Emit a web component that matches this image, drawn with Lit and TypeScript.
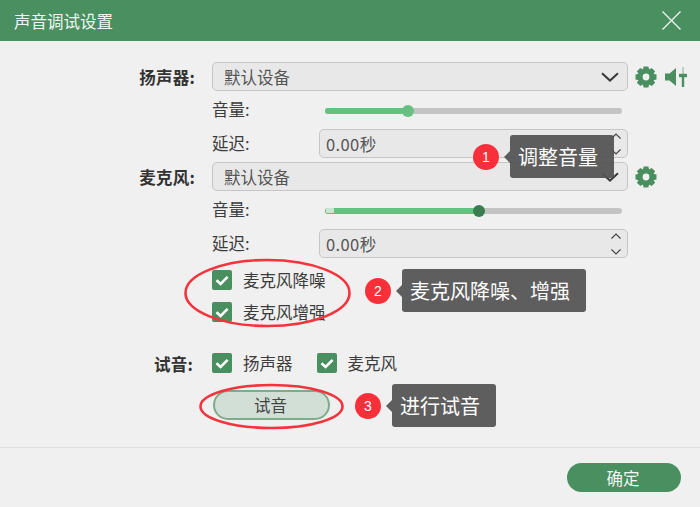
import { LitElement, html, css, svg } from "lit";
import { customElement } from "lit/decorators.js";

const gear = () => html`<svg class="gear" viewBox="0 0 22 22" width="22" height="22">
  ${[0, 45, 90, 135].map((a) => svg`<path d="M8.6 .5H13.4L14.4 5V17L13.4 21.5H8.6L7.6 17V5Z" fill="#4a8f5f" transform="rotate(${a} 11 11)"/>`)}
  <circle cx="11" cy="11" r="8" fill="#4a8f5f"/><circle cx="11" cy="11" r="3.4" fill="#f0f0f0"/>
</svg>`;

const chevron = html`<svg class="chev" viewBox="0 0 18 10" width="18" height="10"><path d="M1 1.2 9 8.6 17 1.2" fill="none" stroke="#3a3a3a" stroke-width="2"/></svg>`;

const check = html`<span class="box"><svg viewBox="0 0 20 20" width="20" height="20"><path d="M4.5 10.2 8.6 14 15.6 6.8" fill="none" stroke="#fff" stroke-width="2.6"/></svg></span>`;

const spin = html`<span class="spin">
  <svg viewBox="0 0 10 6" width="10" height="6"><path d="M.5 5.5 5 1 9.5 5.5" fill="none" stroke="#444" stroke-width="1.2"/></svg>
  <svg viewBox="0 0 10 6" width="10" height="6"><path d="M.5 .5 5 5 9.5 .5" fill="none" stroke="#444" stroke-width="1.2"/></svg>
</span>`;

@customElement("app-root")
export class AppRoot extends LitElement {
  static styles = css`
    :host { display: block; width: 700px; height: 507px; position: relative; overflow: hidden; background: #f0f0f0; color: #3c3c3c;
      font-family: "Noto Sans CJK SC", "Open Sans", sans-serif; font-size: 16.5px; line-height: 20px; }
    .head { height: 41px; background: #4a8f5f; color: #f1f5f1; display: flex; align-items: center; justify-content: space-between; padding: 0 19px 0 14px; box-sizing: border-box; }
    .close { display: block; }
    .form { display: grid; grid-template-columns: 195px 416px 1fr; column-gap: 17px; padding-top: 21px; }
    .lab { grid-column: 1; font-weight: 700; justify-self: end; align-self: center; letter-spacing: .2px; color: #333; }
    .select { height: 29px; box-sizing: border-box; background: #e8e8e8; border: 1px solid #c6c6c6; border-radius: 5px; display: flex; align-items: center; justify-content: space-between; padding: 0 8px 0 11px; color: #555; }
    .tools { display: flex; align-items: center; gap: 8px; margin-left: -10px; margin-top: 1px; }
    .sub { grid-column: 2; display: flex; align-items: center; }
    .vol { height: 38px; }
    .vol .name, .del .name { width: 107px; flex: none; margin-top: -2px; }
    .del { height: 29px; margin-bottom: 4px; }
    .input { flex: 1; height: 29px; box-sizing: border-box; background: #e8e8e8; border: 1px solid #c6c6c6; border-radius: 5px; display: flex; align-items: center; justify-content: space-between; padding: 0 6px; color: #555; }
    .input span:first-child { letter-spacing: .4px; }
    .spin { display: flex; flex-direction: column; gap: 10px; }
    .spin svg { display: block; }
    .track { width: 297px; height: 6px; margin: 2px 0 0 6px; border-radius: 3px; background: #c4c4c4; position: relative; }
    .fill { height: 6px; border-radius: 3px; background: #66c080; position: relative; }
    .thumb { position: absolute; right: -6px; top: -3px; width: 12px; height: 12px; border-radius: 50%; background: #66c080; }
    .thumb.dark { background: #3a7d50; }
    .handle { position: absolute; left: 1px; top: 0; width: 8px; height: 5px; background: #c9e6d2; border-radius: 1px; }
    .checks { padding-left: 212px; margin-top: 8px; display: flex; flex-direction: column; gap: 12px; }
    .ck { display: flex; align-items: center; gap: 11px; height: 20px; }
    .box { width: 20px; height: 20px; background: #4a8f5f; border-radius: 2px; display: block; flex: none; }
    .box svg { display: block; }
    .try { display: grid; grid-template-columns: 193px auto; column-gap: 19px; margin-top: 30px; height: 20px; align-items: center; }
    .try .lab { padding-top: 2px; }
    .tryitems { display: flex; gap: 24px; }
    .testwrap { padding-left: 213px; margin-top: 18px; }
    .test { width: 117px; height: 30px; box-sizing: border-box; border: 2px solid #7eab8b; border-radius: 15px; background: #d2dfd6; display: flex; align-items: center; justify-content: center; color: #444; padding-right: 2px; }
    .foot { margin-top: 27px; border-top: 1px solid #e0e0e0; padding: 15px 19px 0 0; display: flex; justify-content: flex-end; }
    .ok { width: 114px; height: 29px; border-radius: 15px; background: #4a8f5f; color: #f4f7f4; display: flex; align-items: center; justify-content: center; padding-right: 2px; box-sizing: border-box; }
    .rings { position: absolute; left: 0; top: 0; pointer-events: none; }
    .note { position: absolute; display: flex; align-items: center; }
    .badge { width: 26px; height: 26px; border-radius: 50%; background: #f9303a; color: #fff; font: 14px/26px "Liberation Sans", sans-serif; text-align: center; flex: none; margin-right: 11px; }
    .tip { position: relative; height: 43px; box-sizing: border-box; padding: 0 16px 0 8px; background: rgba(84,84,84,.94); color: #fff; border-radius: 3px; font-size: 20px; line-height: 43px; white-space: nowrap; }
    .tip::before { content: ""; position: absolute; left: -6px; top: 16px; border: 6px solid transparent; border-left: 0; border-right-color: rgba(84,84,84,.94); }
    .n1 { left: 473px; top: 135px; }
    .n2 { left: 365px; top: 269px; }
    .n3 { left: 355px; top: 384px; }
  `;

  private slider(pct: number, dark: boolean) {
    return html`<div class="track"><div class="fill" style="width:${pct}%">
      ${dark ? html`<span class="handle"></span>` : ""}<span class="thumb ${dark ? "dark" : ""}"></span></div></div>`;
  }

  private group(label: string, pct: number, dark: boolean, extra: unknown) {
    return html`
      <div class="lab">${label}:</div>
      <div class="select"><span>默认设备</span>${chevron}</div>
      <div class="tools">${extra}</div>
      <div class="sub vol"><span class="name">音量:</span>${this.slider(pct, dark)}</div>
      <div class="sub del"><span class="name">延迟:</span><div class="input"><span>0.00秒</span>${spin}</div></div>
    `;
  }

  render() {
    return html`
      <div class="head"><span>声音调试设置</span>
        <svg class="close" viewBox="0 0 19 19" width="19" height="19"><path d="M.5 .5 18.5 18.5M18.5 .5 .5 18.5" stroke="#f1f5f1" stroke-width="1.3" fill="none"/></svg>
      </div>
      <div class="form">
        ${this.group("扬声器", 28, false, html`${gear()}
          <svg viewBox="0 0 22 20" width="22" height="20"><path d="M0 6.5H4.5L11 1V19L4.5 13.5H0Z" fill="#4a8f5f"/><path d="M18 0V20" stroke="#b9cfc0" stroke-width="2"/><path d="M18 8V20" stroke="#4a8f5f" stroke-width="2.4"/><path d="M14 8.5H22" stroke="#4a8f5f" stroke-width="3.4"/></svg>`)}
        ${this.group("麦克风", 52, true, gear())}
      </div>
      <div class="checks">
        <div class="ck">${check}<span>麦克风降噪</span></div>
        <div class="ck">${check}<span>麦克风增强</span></div>
      </div>
      <div class="try"><div class="lab">试音:</div>
        <div class="tryitems">
          <div class="ck">${check}<span>扬声器</span></div>
          <div class="ck">${check}<span>麦克风</span></div>
        </div>
      </div>
      <div class="testwrap"><div class="test">试音</div></div>
      <div class="foot"><div class="ok">确定</div></div>

      <svg class="rings" width="700" height="507" fill="none" stroke="#f5333c" stroke-width="2.6">
        <ellipse cx="267.5" cy="293" rx="82" ry="33"/>
        <ellipse cx="271.5" cy="406.5" rx="71" ry="21.5"/>
      </svg>
      <div class="note n1"><span class="badge">1</span><span class="tip">调整音量</span></div>
      <div class="note n2"><span class="badge">2</span><span class="tip">麦克风降噪、增强</span></div>
      <div class="note n3"><span class="badge">3</span><span class="tip">进行试音</span></div>
    `;
  }
}
